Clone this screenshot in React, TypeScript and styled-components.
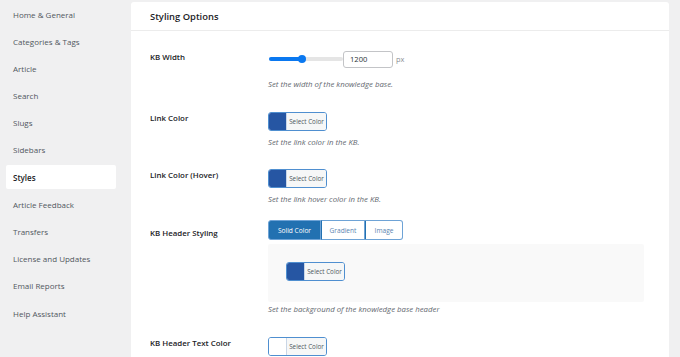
import React from 'react';
import styled, { createGlobalStyle } from 'styled-components';

const GlobalStyle = createGlobalStyle`
  html, body {
    margin: 0;
    padding: 0;
    background: #f0f0f1;
    font-family: "Open Sans", "Noto Sans", sans-serif;
  }
`;

const Page = styled.div`
  display: flex;
  align-items: flex-start;
  width: 680px;
  height: 357px;
  overflow: hidden;
  background: #f0f0f1;
`;

const Sidebar = styled.nav`
  display: flex;
  flex-direction: column;
  width: 110px;
  padding: 2px 0 0 6px;
  margin-right: 15px;
  flex-shrink: 0;
`;

const NavItem = styled.a<{ $active?: boolean }>`
  display: flex;
  align-items: center;
  height: 24px;
  margin-bottom: 3.2px;
  padding-left: 7px;
  font-size: 8px;
  color: ${({ $active }) => ($active ? '#1d2327' : '#50575e')};
  font-weight: ${({ $active }) => ($active ? 600 : 400)};
  background: ${({ $active }) => ($active ? '#fff' : 'transparent')};
  border-radius: 2px;
  cursor: pointer;
`;

const Panel = styled.section`
  width: 538px;
  margin-top: 2px;
  background: #fff;
  border-radius: 3px;
  min-height: 400px;
`;

const PanelHeader = styled.header`
  height: 28px;
  display: flex;
  align-items: center;
  padding-left: 19px;
  border-bottom: 1px solid #ececec;
  font-size: 9.4px;
  font-weight: 600;
  color: #1d2327;
`;

const Body = styled.div`
  padding: 19px 0 0 19px;
  display: flex;
  flex-direction: column;
`;

const Row = styled.div<{ $gap: number }>`
  display: grid;
  grid-template-columns: 118px 1fr;
  margin-bottom: ${({ $gap }) => $gap}px;
`;

const Label = styled.div<{ $top?: number }>`
  font-size: 7.9px;
  font-weight: 600;
  color: #1d2327;
  padding-top: ${({ $top }) => $top ?? 1}px;
`;

const Field = styled.div`
  display: flex;
  flex-direction: column;
`;

const Desc = styled.p<{ $top: number }>`
  margin: ${({ $top }) => $top}px 0 0;
  font-size: 7.8px;
  font-style: italic;
  color: #646970;
`;

const SliderLine = styled.div`
  display: flex;
  align-items: center;
  height: 18px;
`;

const Track = styled.div`
  position: relative;
  width: 74px;
  height: 4px;
  border-radius: 2px;
  background: #e5e5e5;
  margin-left: 1px;
`;

const Fill = styled.div`
  height: 100%;
  border-radius: 2px;
  background: #0a78f0;
`;

const Thumb = styled.div`
  position: absolute;
  top: 50%;
  width: 8px;
  height: 8px;
  margin: -4px 0 0 -4px;
  border-radius: 50%;
  background: #0a78f0;
`;

const NumberBox = styled.div`
  width: 50px;
  height: 17px;
  box-sizing: border-box;
  border: 1px solid #c3c4c7;
  border-radius: 3px;
  display: flex;
  align-items: center;
  padding-left: 6px;
  font-size: 7.6px;
  color: #2c3338;
`;

const Unit = styled.span`
  font-size: 7.4px;
  color: #8c8f94;
  margin-left: 3px;
`;

const ColorButton = styled.div`
  display: flex;
  width: 59px;
  height: 19px;
  box-sizing: border-box;
  border: 1px solid #4f8fd0;
  border-radius: 3px;
  overflow: hidden;
`;

const Swatch = styled.span<{ $color: string }>`
  width: 17px;
  background: ${({ $color }) => $color};
  border-right: 1px solid #c9d6e6;
`;

const SwatchLabel = styled.span`
  flex: 1;
  display: flex;
  align-items: center;
  justify-content: center;
  background: #f6f7f7;
  font-size: 6.3px;
  color: #50575e;
`;

const Tabs = styled.div`
  display: flex;
  height: 20px;
`;

const TabBtn = styled.div<{ $w: number; $active?: boolean }>`
  width: ${({ $w }) => $w}px;
  box-sizing: border-box;
  display: flex;
  align-items: center;
  justify-content: center;
  font-size: 6.6px;
  border: 1px solid #6ea3d6;
  border-left-width: ${({ $active }) => ($active ? 1 : 0)}px;
  background: ${({ $active }) => ($active ? '#2271b1' : '#fff')};
  color: ${({ $active }) => ($active ? '#fff' : '#5a84b0')};
  &:first-child {
    border-radius: 3px 0 0 3px;
  }
  &:last-child {
    border-radius: 0 3px 3px 0;
  }
  & + & {
    border-left: 1px solid #2271b1;
  }
`;

const Tray = styled.div`
  margin-top: 4px;
  width: 376px;
  height: 58px;
  box-sizing: border-box;
  background: #f9f9f9;
  border-radius: 2px;
  padding: 18px 0 0 18px;
`;

const navItems = [
  'Home & General',
  'Categories & Tags',
  'Article',
  'Search',
  'Slugs',
  'Sidebars',
  'Styles',
  'Article Feedback',
  'Transfers',
  'License and Updates',
  'Email Reports',
  'Help Assistant',
];

const ColorPick = ({ color }: { color: string }) => (
  <ColorButton>
    <Swatch $color={color} />
    <SwatchLabel>Select Color</SwatchLabel>
  </ColorButton>
);

export default function App() {
  const pct = 45;
  return (
    <>
      <GlobalStyle />
      <Page>
        <Sidebar>
          {navItems.map((n) => (
            <NavItem key={n} $active={n === 'Styles'}>
              {n}
            </NavItem>
          ))}
        </Sidebar>
        <Panel>
          <PanelHeader>Styling Options</PanelHeader>
          <Body>
            <Row $gap={23}>
              <Label $top={2}>KB Width</Label>
              <Field>
                <SliderLine>
                  <Track>
                    <Fill style={{ width: `${pct}%` }} />
                    <Thumb style={{ left: `${pct}%` }} />
                  </Track>
                  <NumberBox>1200</NumberBox>
                  <Unit>px</Unit>
                </SliderLine>
                <Desc $top={11}>Set the width of the knowledge base.</Desc>
              </Field>
            </Row>
            <Row $gap={22}>
              <Label>Link Color</Label>
              <Field>
                <ColorPick color="#2656a3" />
                <Desc $top={6}>Set the link color in the KB.</Desc>
              </Field>
            </Row>
            <Row $gap={16}>
              <Label>Link Color (Hover)</Label>
              <Field>
                <ColorPick color="#2656a3" />
                <Desc $top={6}>Set the link hover color in the KB.</Desc>
              </Field>
            </Row>
            <Row $gap={23}>
              <Label $top={8}>KB Header Styling</Label>
              <Field>
                <Tabs>
                  <TabBtn $w={53} $active>Solid Color</TabBtn>
                  <TabBtn $w={44}>Gradient</TabBtn>
                  <TabBtn $w={38}>Image</TabBtn>
                </Tabs>
                <Tray>
                  <ColorPick color="#2656a3" />
                </Tray>
                <Desc $top={2}>Set the background of the knowledge base header</Desc>
              </Field>
            </Row>
            <Row $gap={0}>
              <Label>KB Header Text Color</Label>
              <Field>
                <ColorPick color="#ffffff" />
              </Field>
            </Row>
          </Body>
        </Panel>
      </Page>
    </>
  );
}
